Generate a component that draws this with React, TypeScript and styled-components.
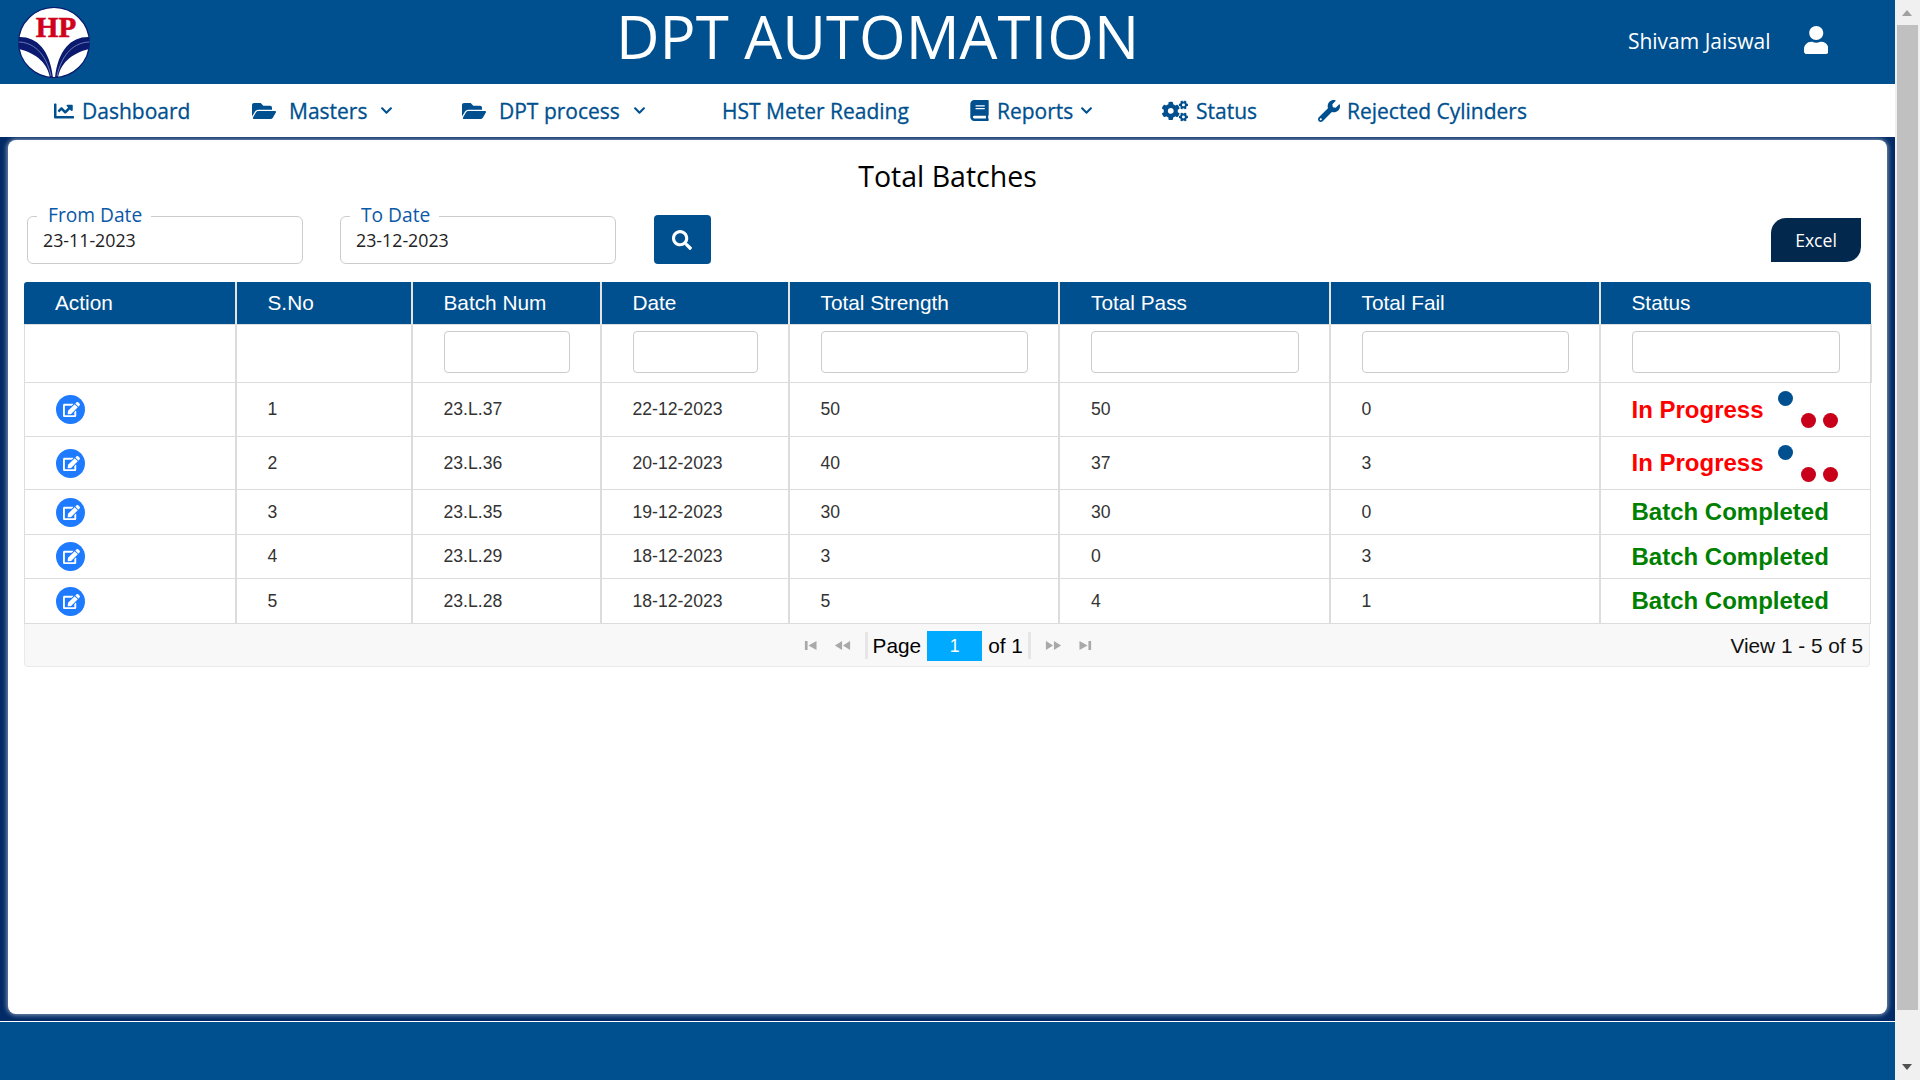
import React from 'react';
import styled, { createGlobalStyle } from 'styled-components';
import {
  FaBook,
  FaChartLine,
  FaChevronDown,
  FaCogs,
  FaEdit,
  FaFolderOpen,
  FaSearch,
  FaUser,
  FaWrench,
} from 'react-icons/fa';

const BLUE = '#00508f';

const GlobalStyle = createGlobalStyle`
  html, body {
    margin: 0;
    padding: 0;
    height: 100%;
    overflow: hidden;
    background: #fff;
    font-family: "Open Sans", "Liberation Sans", sans-serif;
  }
  * { box-sizing: border-box; }
`;

const columns = [
  { title: 'Action', width: 211.5 },
  { title: 'S.No', width: 176 },
  { title: 'Batch Num', width: 189, filter: true },
  { title: 'Date', width: 188, filter: true },
  { title: 'Total Strength', width: 270.5, filter: true },
  { title: 'Total Pass', width: 270.5, filter: true },
  { title: 'Total Fail', width: 270, filter: true },
  { title: 'Status', width: 271, filter: true },
];

const rows = [
  { sno: 1, batch: '23.L.37', date: '22-12-2023', strength: 50, pass: 50, fail: 0, done: false, h: 54 },
  { sno: 2, batch: '23.L.36', date: '20-12-2023', strength: 40, pass: 37, fail: 3, done: false, h: 53 },
  { sno: 3, batch: '23.L.35', date: '19-12-2023', strength: 30, pass: 30, fail: 0, done: true, h: 45 },
  { sno: 4, batch: '23.L.29', date: '18-12-2023', strength: 3, pass: 0, fail: 3, done: true, h: 44 },
  { sno: 5, batch: '23.L.28', date: '18-12-2023', strength: 5, pass: 4, fail: 1, done: true, h: 45 },
];

function HpLogo() {
  return (
    <LogoSvg viewBox="0 0 72 71">
      <defs>
        <clipPath id="hpClip">
          <ellipse cx="36" cy="35.5" rx="35.4" ry="35" />
        </clipPath>
      </defs>
      <ellipse cx="36" cy="35.5" rx="35.4" ry="35" fill="#fff" stroke="#0b1a6e" strokeWidth="1.2" />
      <text
        x="38"
        y="30"
        textAnchor="middle"
        fontFamily="'Liberation Serif', serif"
        fontWeight="700"
        fontSize="29"
        fill="#d0021b"
        stroke="#d0021b"
        strokeWidth="0.6"
      >
        HP
      </text>
      <g clipPath="url(#hpClip)">
        <path d="M0 30 C18 29 32 42 35 71 L32 71 C30 58 20 46 0 42 Z" fill="#0b1a6e" />
        <path d="M0 35 C15 35 28 46 33 69" fill="none" stroke="#8fa4d8" strokeWidth="0.7" />
        <path d="M72 30 C54 29 40 42 37 71 L40 71 C42 58 52 46 72 42 Z" fill="#0b1a6e" />
        <path d="M72 35 C57 35 44 46 39 69" fill="none" stroke="#8fa4d8" strokeWidth="0.7" />
      </g>
    </LogoSvg>
  );
}

function Loader() {
  return (
    <LoaderSvg viewBox="0 0 62 44">
      <circle cx="7.5" cy="7.5" r="7.5" fill={BLUE} />
      <circle cx="30.5" cy="29.5" r="7.5" fill="#c8001a" />
      <circle cx="52.5" cy="29.5" r="7.5" fill="#c8001a" />
    </LoaderSvg>
  );
}

function PagerGlyph({ dir, end }: { dir: 'left' | 'right'; end: boolean }) {
  // jqGrid style seek icons, drawn for the left and flipped for the right
  const shape = end ? 'M1 1h3v10H1z M14 1v10L5 6z' : 'M9 1v10L1 6z M18 1v10L10 6z';
  return (
    <GlyphSvg viewBox="0 0 19 12" $flip={dir === 'right'}>
      <path d={shape} fill="#a9a9a9" />
    </GlyphSvg>
  );
}

export default function App() {
  return (
    <Shell>
      <GlobalStyle />
      <Page>
        <Header>
          <HpLogo />
          <AppTitle>DPT AUTOMATION</AppTitle>
          <UserName>Shivam Jaiswal</UserName>
          <UserIcon />
        </Header>
        <Nav>
          <NavItem $left={54}>
            <FaChartLine size={20} />
            <span>Dashboard</span>
          </NavItem>
          <NavItem $left={252} $gap={13}>
            <FaFolderOpen size={24} />
            <span>Masters</span>
            <Chevron />
          </NavItem>
          <NavItem $left={462} $gap={13}>
            <FaFolderOpen size={24} />
            <span>DPT process</span>
            <Chevron />
          </NavItem>
          <NavItem $left={722}>
            <span>HST Meter Reading</span>
          </NavItem>
          <NavItem $left={969} $gap={7}>
            <FaBook size={21} />
            <span>Reports</span>
            <Chevron />
          </NavItem>
          <NavItem $left={1162} $gap={8}>
            <FaCogs size={26} />
            <span>Status</span>
          </NavItem>
          <NavItem $left={1318} $gap={7}>
            <FaWrench size={22} />
            <span>Rejected Cylinders</span>
          </NavItem>
        </Nav>
        <Frame>
          <Card>
            <PageTitle>Total Batches</PageTitle>
            <Toolbar>
              <DateField>
                <legend>From Date</legend>
                <DateInput readOnly value="23-11-2023" />
              </DateField>
              <DateField>
                <legend>To Date</legend>
                <DateInput readOnly value="23-12-2023" />
              </DateField>
              <SearchButton>
                <FaSearch size={20} />
              </SearchButton>
              <ExcelButton>Excel</ExcelButton>
            </Toolbar>
            <GridWrap>
              <Grid>
                <colgroup>
                  {columns.map((c) => (
                    <Col key={c.title} $w={c.width} />
                  ))}
                </colgroup>
                <thead>
                  <tr>
                    {columns.map((c) => (
                      <HeadCell key={c.title}>{c.title}</HeadCell>
                    ))}
                  </tr>
                  <FilterRow>
                    {columns.map((c) => (
                      <FilterCell key={c.title}>{c.filter && <FilterInput />}</FilterCell>
                    ))}
                  </FilterRow>
                </thead>
                <tbody>
                  {rows.map((r) => (
                    <Row key={r.sno} $h={r.h}>
                      <Cell>
                        <EditButton>
                          <FaEdit size={17} />
                        </EditButton>
                      </Cell>
                      <Cell>{r.sno}</Cell>
                      <Cell>{r.batch}</Cell>
                      <Cell>{r.date}</Cell>
                      <Cell>{r.strength}</Cell>
                      <Cell>{r.pass}</Cell>
                      <Cell>{r.fail}</Cell>
                      <StatusCell>
                        {r.done ? (
                          <StatusText $done>Batch Completed</StatusText>
                        ) : (
                          <StatusFlex>
                            <StatusText>In Progress</StatusText>
                            <Loader />
                          </StatusFlex>
                        )}
                      </StatusCell>
                    </Row>
                  ))}
                </tbody>
              </Grid>
              <Pager>
                <span />
                <PagerCenter>
                  <PagerSide>
                    <PagerGlyph dir="left" end />
                    <PagerGlyph dir="left" end={false} />
                  </PagerSide>
                  <PagerSep />
                  <PageLabel>Page</PageLabel>
                  <PageBox>1</PageBox>
                  <PageLabel>of 1</PageLabel>
                  <PagerSep />
                  <PagerSide>
                    <PagerGlyph dir="right" end={false} />
                    <PagerGlyph dir="right" end />
                  </PagerSide>
                </PagerCenter>
                <ViewInfo>View 1 - 5 of 5</ViewInfo>
              </Pager>
            </GridWrap>
          </Card>
        </Frame>
        <Footer />
      </Page>
      <ScrollRail>
        <ScrollTop />
        <ScrollThumb />
        <ScrollBottom />
      </ScrollRail>
    </Shell>
  );
}

const Shell = styled.div`
  display: flex;
  width: 1920px;
  height: 1080px;
  overflow: hidden;
`;

const Page = styled.div`
  display: flex;
  flex-direction: column;
  width: 1895px;
  height: 1080px;
`;

const Header = styled.header`
  display: flex;
  align-items: center;
  flex: 0 0 84px;
  padding-left: 18px;
  background: ${BLUE};
  color: #fff;
`;

const LogoSvg = styled.svg`
  width: 72px;
  height: 71px;
  flex: none;
`;

const AppTitle = styled.h1`
  margin: 0 0 13px 526px;
  font-size: 60px;
  font-weight: 400;
  line-height: 70px;
  white-space: nowrap;
`;

const UserName = styled.div`
  margin: 0 0 2px auto;
  font-size: 21px;
`;

const UserIcon = styled(FaUser)`
  width: 24.5px;
  height: 28px;
  margin: 0 67px 4px 33px;
`;

const Nav = styled.nav`
  display: grid;
  flex: 0 0 53px;
  align-items: center;
  background: #fff;
  color: ${BLUE};
`;

const NavItem = styled.div<{ $left: number; $gap?: number }>`
  grid-area: 1 / 1;
  display: flex;
  align-items: center;
  gap: ${({ $gap }) => $gap ?? 8}px;
  margin-left: ${({ $left }) => $left}px;
  font-size: 21px;
  font-weight: 500;
  -webkit-text-stroke: 0.3px ${BLUE};
  white-space: nowrap;
`;

const Chevron = styled(FaChevronDown)`
  width: 13px;
  height: 13px;
`;

const Frame = styled.main`
  flex: 0 0 884px;
  padding: 3px 8px 7px 8px;
  background: #012a66;
`;

const Card = styled.section`
  height: 874px;
  border-radius: 8px;
  background: #fff;
  box-shadow: 0 0 5px 1px rgba(255, 255, 255, 0.55);
`;

const PageTitle = styled.h2`
  margin: 0;
  padding-top: 14px;
  height: 62px;
  text-align: center;
  font-size: 28.5px;
  font-weight: 400;
  line-height: 44px;
  color: #000;
`;

const Toolbar = styled.div`
  display: flex;
  align-items: flex-end;
  gap: 37px;
  padding: 0 26px 0 19px;
  height: 61px;
`;

const DateField = styled.fieldset`
  width: 276px;
  height: 61px;
  margin: 0 0 -1px;
  padding: 0 15px;
  border: 1px solid #ccc;
  border-radius: 6px;

  legend {
    margin-left: -6px;
    padding: 0 9px 2px 11px;
    font-size: 19.2px;
    line-height: 24px;
    color: #0a58a8;
  }
`;

const DateInput = styled.input`
  display: block;
  width: 100%;
  height: 30px;
  margin-top: -4px;
  padding: 0;
  border: 0;
  outline: 0;
  background: transparent;
  font-family: inherit;
  font-size: 17.8px;
  color: #222;
`;

const SearchButton = styled.button`
  display: flex;
  align-items: center;
  justify-content: center;
  width: 57px;
  height: 49px;
  margin: 0 0 -1px 1px;
  padding: 0 1px 0 0;
  border: 0;
  border-radius: 4px;
  background: ${BLUE};
  color: #fff;
`;

const ExcelButton = styled.button`
  width: 90px;
  height: 44px;
  margin: 0 0 1px auto;
  border: 0;
  border-radius: 15px 0 15px 0;
  background: #02284d;
  color: #fff;
  font-family: inherit;
  font-size: 17.6px;
`;

const GridWrap = styled.div`
  margin: 19px 16px 0 15.5px;
  font-family: "Liberation Sans", Arial, sans-serif;
`;

const Grid = styled.table`
  width: 1846.5px;
  table-layout: fixed;
  border-collapse: collapse;
`;

const Col = styled.col<{ $w: number }>`
  width: ${({ $w }) => $w}px;
`;

const HeadCell = styled.th`
  height: 42px;
  padding: 0 0 0 31px;
  border-right: 2px solid #e4e4e4;
  background: ${BLUE};
  color: #fff;
  font-size: 20.8px;
  font-weight: 400;
  text-align: left;

  &:first-child { border-top-left-radius: 3px; }
  &:last-child { border-right: 0; border-top-right-radius: 3px; }
`;

const FilterRow = styled.tr`
  height: 58px;
`;

const Cell = styled.td`
  padding: 1px 30px 0 31px;
  border: 1px solid #dcdcdc;
  border-right-width: 2px;
  font-size: 17.6px;
  color: #333;
`;

const FilterCell = styled(Cell)`
  padding: 0 30px 2px 31px;
`;

const Row = styled.tr<{ $h: number }>`
  height: ${({ $h }) => $h}px;
`;

const FilterInput = styled.input`
  display: block;
  width: 100%;
  height: 42px;
  border: 1px solid #ccc;
  border-radius: 4px;
  background: #fff;
  outline: 0;
`;

const EditButton = styled.button`
  display: flex;
  align-items: center;
  justify-content: center;
  width: 29px;
  height: 29px;
  padding: 0 0 0 2px;
  border: 0;
  border-radius: 50%;
  background: #1e7bff;
  color: #fff;
`;

const StatusCell = styled(Cell)`
  padding-right: 0;
  border-right-width: 1px;
`;

const StatusFlex = styled.div`
  display: flex;
  align-items: center;
`;

const StatusText = styled.span<{ $done?: boolean }>`
  font-size: 24px;
  font-weight: 700;
  color: ${({ $done }) => ($done ? '#008000' : '#ff0000')};
  white-space: nowrap;
`;

const LoaderSvg = styled.svg`
  width: 62px;
  height: 44px;
  margin: 7px 0 0 14px;
  flex: none;
`;

const Pager = styled.div`
  display: grid;
  grid-template-columns: 1fr auto 1fr;
  align-items: center;
  width: 1846.5px;
  height: 43px;
  padding: 2px 0 0 2px;
  border: 1px solid #eaeaea;
  border-top: 0;
  border-radius: 0 0 4px 4px;
  background: #f8f8f8;
`;

const PagerCenter = styled.div`
  display: flex;
  align-items: center;
  color: #000;
`;

const PagerSide = styled.div`
  display: flex;
  gap: 13px;
  padding: 0 9px;
`;

const GlyphSvg = styled.svg<{ $flip: boolean }>`
  width: 17px;
  height: 11px;
  transform: ${({ $flip }) => ($flip ? 'scaleX(-1)' : 'none')};
`;

const PagerSep = styled.span`
  width: 3px;
  height: 27px;
  margin: 0 5px;
  background: #e6e6e6;
`;

const PageLabel = styled.span`
  font-size: 20.8px;
  line-height: 30px;
`;

const PageBox = styled.span`
  width: 55px;
  height: 30px;
  margin: 0 6px;
  background: #00aaff;
  color: #fff;
  font-size: 17.6px;
  line-height: 30px;
  text-align: center;
`;

const ViewInfo = styled.span`
  padding-right: 6px;
  font-size: 20.8px;
  text-align: right;
  color: #111;
`;

const Footer = styled.footer`
  flex: 0 0 59px;
  border-top: 1px solid #fff;
  background: ${BLUE};
`;

const ScrollRail = styled.div`
  display: flex;
  flex-direction: column;
  width: 25px;
  padding: 0 2px;
  background: #f0f0f0;
`;

const ScrollThumb = styled.div`
  flex: 0 0 985px;
  background: #c0c0c0;
`;

const ScrollTop = styled.div`
  flex: 0 0 25px;
  position: relative;

  &::after {
    content: '';
    position: absolute;
    left: 5px;
    top: 10px;
    border-left: 5.5px solid transparent;
    border-right: 5.5px solid transparent;
    border-bottom: 6px solid #a0a0a0;
  }
`;

const ScrollBottom = styled.div`
  flex: 1;
  position: relative;

  &::after {
    content: '';
    position: absolute;
    left: 5px;
    bottom: 10px;
    border-left: 5.5px solid transparent;
    border-right: 5.5px solid transparent;
    border-top: 6px solid #505050;
  }
`;
